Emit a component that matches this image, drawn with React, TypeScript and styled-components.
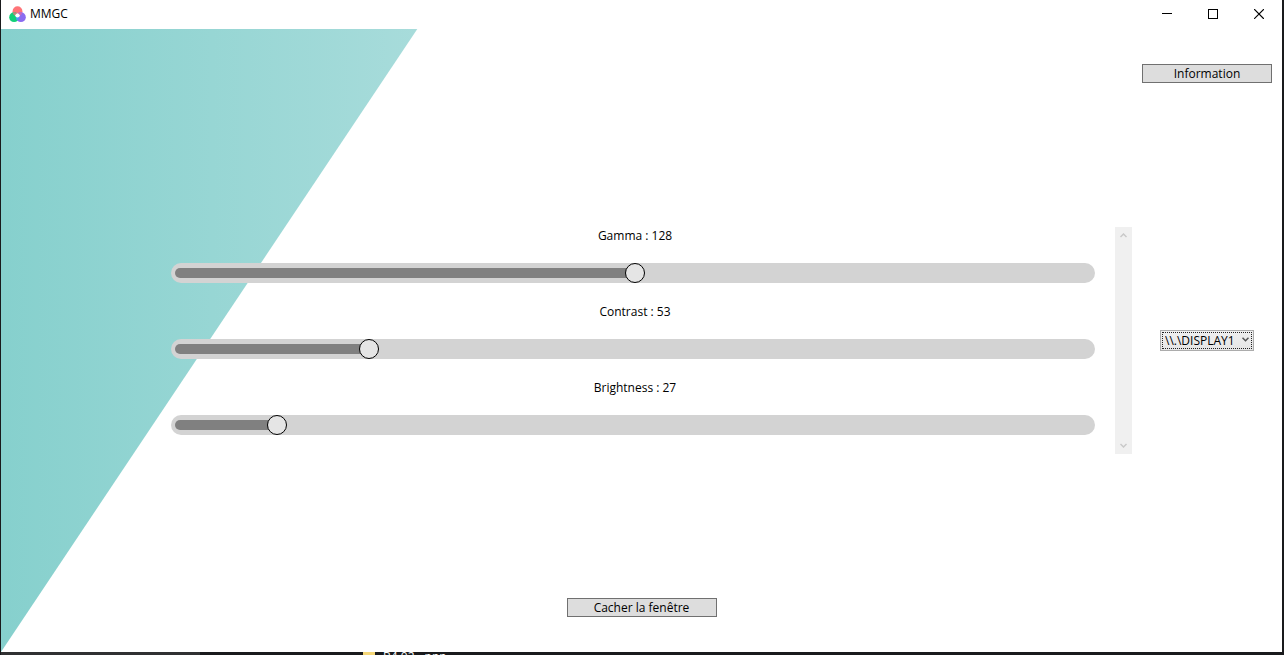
import React, { useState } from "react";
import styled, { createGlobalStyle } from "styled-components";

const GlobalStyle = createGlobalStyle`
  *, *::before, *::after { box-sizing: border-box; }
  body { margin: 0; background: #191919; }
  body, button, select { font-family: "Segoe UI", "Open Sans", "Noto Sans", sans-serif; font-size: 12px; }
`;

const Desktop = styled.div`
  display: flex;
  flex-direction: column;
  min-height: 100vh;
  padding: 0 2px 0 1px;
  background: #191a1c;
`;

const Window = styled.main`
  flex: 1;
  display: flex;
  flex-direction: column;
  background: #fff;
  color: #000;
`;

const TitleBar = styled.header`
  display: flex;
  align-items: center;
  height: 29px;
  padding-left: 8px;
`;

const Title = styled.h1`
  flex: 1;
  margin: 0 0 2px 4px;
  font-size: 12px;
  font-weight: 400;
  line-height: 16px;
`;

const CaptionButton = styled.button`
  display: grid;
  place-items: center;
  width: 46px;
  height: 27px;
  margin-bottom: 2px;
  padding: 0;
  border: 0;
  background: transparent;
`;

const Body = styled.div`
  position: relative;
  isolation: isolate;
  flex: 1;
  display: flex;
  flex-direction: column;
  &::before {
    content: "";
    position: absolute;
    inset: 0;
    z-index: -1;
    background: linear-gradient(90deg, #86d0cd, #a8dcdb 33%);
    clip-path: polygon(0 0, 32.5% 0, 0 100%);
  }
`;

const ActionRow = styled.div<{ $align: string }>`
  display: flex;
  justify-content: ${(p) => p.$align};
  padding: 35px 10px;
`;

const ActionButton = styled.button<{ $width: number }>`
  width: ${(p) => p.$width}px;
  height: 19px;
  padding: 0;
  border: 1px solid #707070;
  background: #ddd;
  color: #000;
  line-height: 16px;
`;

const Middle = styled.div`
  flex: 1;
  display: grid;
  grid-template-columns: 150px 1fr 150px;
  align-items: center;
`;

const Scroller = styled.section`
  grid-column: 2;
  display: flex;
`;

const Settings = styled.div`
  flex: 1;
  display: flex;
  flex-direction: column;
  gap: 20px;
  padding: 0 20px 19px;
`;

const Setting = styled.div`
  display: flex;
  flex-direction: column;
  gap: 18px;
`;

const Label = styled.label`
  padding-left: 4px;
  line-height: 18px;
  text-align: center;
`;

const Track = styled.div`
  display: grid;
  align-items: center;
  height: 20px;
  border-radius: 10px;
  background: #d3d3d3;
  > * { grid-area: 1 / 1; }
`;

const Fill = styled.div`
  height: 10px;
  margin-left: 4px;
  border-radius: 5px;
  background: #808080;
`;

const Range = styled.input`
  appearance: none;
  width: 100%;
  height: 20px;
  margin: 0;
  background: transparent;
  &::-webkit-slider-thumb {
    appearance: none;
    width: 20px;
    height: 20px;
    border: 1px solid #000;
    border-radius: 50%;
    background: #e5e5e5;
  }
`;

const ScrollBar = styled.div`
  display: flex;
  flex-direction: column;
  justify-content: space-between;
  width: 17px;
  background: #f0f0f0;
`;

const ScrollButton = styled.button`
  display: grid;
  place-items: center;
  height: 17px;
  padding: 0;
  border: 0;
  background: transparent;
`;

const DisplayPicker = styled.div`
  position: relative;
  justify-self: center;
  width: 94px;
  height: 21px;
  &::after {
    content: "";
    position: absolute;
    inset: 2px;
    border: 1px dotted #222;
    pointer-events: none;
  }
  svg {
    position: absolute;
    right: 5px;
    top: 7px;
    pointer-events: none;
  }
`;

const Select = styled.select`
  appearance: none;
  display: block;
  width: 100%;
  height: 100%;
  padding: 0 0 0 4px;
  border: 1px solid #acacac;
  border-radius: 0;
  outline: 0;
  background: linear-gradient(#f0f0f0, #e5e5e5);
  color: #000;
`;

const Taskbar = styled.footer`
  display: flex;
  height: 3px;
  overflow: hidden;
  padding-left: 362px;
  background: linear-gradient(90deg, #303132 199px, #191a1c 199px);
  color: #fff;
  line-height: 10px;
  white-space: nowrap;
`;

const Folder = styled.span`
  width: 12px;
  margin-right: 8px;
  background: #f5d778;
`;

const Logo = () => (
  <svg width="17" height="17" viewBox="0 0 17 17" aria-hidden="true">
    <circle cx="8.5" cy="5.2" r="4.9" fill="#ff7478" />
    <circle cx="5.1" cy="11.2" r="4.9" fill="#12d078" />
    <circle cx="11.9" cy="11.2" r="4.9" fill="#8a6cf0" />
    <path d="M3.7 6.5 A4.9 4.9 0 0 1 8.4 7.8 A4.9 4.9 0 0 1 5.6 9.6 A4.9 4.9 0 0 1 3.7 6.5" fill="#b98a80" />
    <path d="M13.3 6.5 A4.9 4.9 0 0 0 8.6 7.8 A4.9 4.9 0 0 0 11.4 9.6 A4.9 4.9 0 0 0 13.3 6.5" fill="#c46cc0" />
    <path d="M8.5 7.7 A4.9 4.9 0 0 1 8.5 14.7 A4.9 4.9 0 0 1 8.5 7.7" fill="#3fa4f0" />
    <path d="M8.5 7.2 Q10 7.4 11 9.4 Q10.2 11.2 8.5 11.6 Q6.8 11.2 6 9.4 Q7 7.4 8.5 7.2" fill="#fff" />
  </svg>
);

const SETTINGS = [
  { id: "gamma", name: "Gamma", value: 128 },
  { id: "contrast", name: "Contrast", value: 53 },
  { id: "brightness", name: "Brightness", value: 27 },
];

const MAX = 255;

function SliderSetting({ id, name, initial }: { id: string; name: string; initial: number }) {
  const [value, setValue] = useState(initial);
  return (
    <Setting>
      <Label htmlFor={id}>{`${name} : ${value}`}</Label>
      <Track>
        <Fill style={{ width: `calc((100% - 20px) * ${value / MAX} + 6px)` }} />
        <Range
          id={id}
          type="range"
          min={0}
          max={MAX}
          value={value}
          onChange={(e) => setValue(Number(e.target.value))}
        />
      </Track>
    </Setting>
  );
}

export default function App() {
  return (
    <>
      <GlobalStyle />
      <Desktop>
        <Window>
          <TitleBar>
            <Logo />
            <Title>MMGC</Title>
            <CaptionButton aria-label="Minimize">
              <svg width="10" height="10" shapeRendering="crispEdges"><path d="M0 4.5H10" stroke="#000" /></svg>
            </CaptionButton>
            <CaptionButton aria-label="Maximize">
              <svg width="10" height="10" shapeRendering="crispEdges"><path d="M.5 .5H9.5V9.5H.5Z" stroke="#000" fill="none" /></svg>
            </CaptionButton>
            <CaptionButton aria-label="Close">
              <svg width="10" height="10"><path d="M.5 .5L9.5 9.5M9.5 .5L.5 9.5" stroke="#000" strokeWidth="1.1" strokeLinecap="square" /></svg>
            </CaptionButton>
          </TitleBar>
          <Body>
            <ActionRow $align="flex-end">
              <ActionButton $width={130}>Information</ActionButton>
            </ActionRow>
            <Middle>
              <Scroller>
                <Settings>
                  {SETTINGS.map((s) => (
                    <SliderSetting key={s.id} id={s.id} name={s.name} initial={s.value} />
                  ))}
                </Settings>
                <ScrollBar>
                  <ScrollButton disabled aria-label="Scroll up">
                    <svg width="7" height="5"><path d="M.5 4L3.5 1L6.5 4" stroke="#c9c9c9" strokeWidth="1.5" fill="none" /></svg>
                  </ScrollButton>
                  <ScrollButton disabled aria-label="Scroll down">
                    <svg width="7" height="5"><path d="M.5 1L3.5 4L6.5 1" stroke="#c9c9c9" strokeWidth="1.5" fill="none" /></svg>
                  </ScrollButton>
                </ScrollBar>
              </Scroller>
              <DisplayPicker>
                <Select aria-label="Display">
                  <option>{"\\\\.\\DISPLAY1"}</option>
                </Select>
                <svg width="7" height="5"><path d="M.5 .8L3.5 3.8L6.5 .8" stroke="#555" strokeWidth="1.5" fill="none" /></svg>
              </DisplayPicker>
            </Middle>
            <ActionRow $align="center">
              <ActionButton $width={150}>Cacher la fenêtre</ActionButton>
            </ActionRow>
          </Body>
        </Window>
        <Taskbar>
          <Folder />
          B4.02 - ppp
        </Taskbar>
      </Desktop>
    </>
  );
}
